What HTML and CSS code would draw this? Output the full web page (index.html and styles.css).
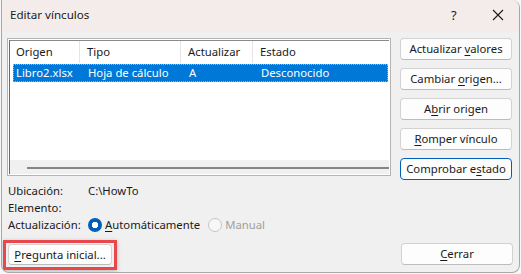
FILE: index.html
```html
<!DOCTYPE html>
<html lang="es">
<head>
  <meta charset="UTF-8">
  <title>Editar vínculos</title>
  <link rel="stylesheet" href="styles.css">
</head>
<body>
  <div class="window">
    <div class="titlebar">
      <span class="title">Editar vínculos</span>
      <span class="help">?</span>
      <span class="close">
        <svg width="12" height="12" viewBox="0 0 12 12"><path d="M1 1L11 11M11 1L1 11" stroke="#1a1a1a" stroke-width="1.1" fill="none"/></svg>
      </span>
    </div>
    <div class="main">
      <div class="left">
        <div class="list">
          <div class="list-inner">
            <div class="row head">
              <div class="c1">Origen</div>
              <div class="c2">Tipo</div>
              <div class="c3">Actualizar</div>
              <div class="c4">Estado</div>
            </div>
            <div class="row sel">
              <div class="c1">Libro2.xlsx</div>
              <div class="c2">Hoja de cálculo</div>
              <div class="c3">A</div>
              <div class="c4">Desconocido</div>
            </div>
            <div class="spacer"></div>
            <div class="hscroll"><div class="thumb"></div></div>
          </div>
        </div>
        <div class="info">
          <div class="info-row"><span class="lbl">Ubicación:</span><span>C:\HowTo</span></div>
          <div class="info-row"><span class="lbl">Elemento:</span></div>
          <div class="info-row">
            <span class="lbl">Actualización:</span>
            <span class="radio on"></span><span class="rtext"><u>A</u>utomáticamente</span>
            <span class="radio off"></span><span class="rtext dim">Manual</span>
          </div>
        </div>
      </div>
      <div class="right">
        <button class="btn">Actualizar <u>v</u>alores</button>
        <button class="btn">Cambiar <u>o</u>rigen...</button>
        <button class="btn">A<u>b</u>rir origen</button>
        <button class="btn"><u>R</u>omper vínculo</button>
        <button class="btn focus">Comprobar e<u>s</u>tado</button>
      </div>
    </div>
    <div class="bottom">
      <span class="mark"><button class="btn small"><u>P</u>regunta inicial...</button></span>
      <button class="btn close-btn"><u>C</u>errar</button>
    </div>
  </div>
</body>
</html>
```

FILE: styles.css
```css
* {box-sizing: border-box;}
body {
  margin: 0;
  background: #f7f7f7;
  font-family: "Noto Sans", sans-serif;
  font-size: 11.3px;
  line-height: 16px;
  color: #1a1a1a;
}
.window {
  margin-left: 1px;
  width: 519px;
  height: 273px;
  background: #f0f0f0;
  border: 1px solid #a7a7a7;
  border-top: none;
  border-radius: 0 8px 8px 8px;
  overflow: hidden;
}
.titlebar {
  height: 32px;
  background: #f4eceb;
  display: flex;
  align-items: center;
  padding-left: 8px;
}
.title {flex: 1; padding-bottom: 2px; font-size: 11.6px;}
.help {width: 26px; font-size: 13px; padding-bottom: 2px;}
.close {width: 42px; display: flex; justify-content: center; padding-bottom: 2px;}
.main {
  display: flex;
  padding: 6px 0 0 5px;
}
.left {width: 384px;}
.list {
  height: 138px;
  border: 1px solid #b4b4b4;
  padding: 1px;
  background: #fff;
}
.list-inner {
  height: 100%;
  border-left: 1px solid #6a6a6a;
  border-top: 1px solid #8a8a8a;
  display: flex;
  flex-direction: column;
}
.row {display: flex; height: 20px; align-items: center;}
.row.head {height: 22px; margin-left: -1px;}
.row div {padding-left: 7px; white-space: nowrap;}
.head div {border-right: 1px solid #e5e5e5; height: 100%; display: flex; align-items: center;}
.c1 {width: 71px;}
.c2 {width: 101px;}
.c3 {width: 72px;}
.c4 {flex: 1;}
.head .c4 {border-right: none;}
.row.sel {
  margin: 1px 0 0 3px;
  width: 375px;
  height: 18px;
  background: #0078d7;
  color: #fff;
  outline: 1px dotted #f5a04a;
  outline-offset: -1px;
}
.sel .c1 {width: 68px; padding-left: 3px;}
.spacer {flex: 1;}
.hscroll {
  height: 14px;
  background: #f0f0f0;
  padding: 7px 0 0 17px;
}
.thumb {height: 2px; background: #858585;}
.info {padding: 6px 0 0 1px;}
.info-row {display: flex; align-items: center; height: 17px;}
.lbl {width: 80px;}
.radio {
  width: 14px;
  height: 14px;
  border-radius: 50%;
  margin-right: 3px;
}
.radio.on {background: radial-gradient(circle, #fff 0 3px, #005fb8 3.5px);}
.radio.off {border: 1px solid #c5c5c5; background: #f7f7f7; margin-left: 8px;}
.dim {color: #a0a0a0;}
.right {
  display: flex;
  flex-direction: column;
  gap: 8px;
  margin-left: 9px;
}
.btn {
  width: 112px;
  height: 22px;
  padding: 0;
  font: inherit;
  color: #1a1a1a;
  background: #fdfdfd;
  border: 1px solid #d2d2d2;
  border-bottom-color: #bcbcbc;
  border-radius: 4px;
}
.btn.focus {border: 1.5px solid #005fb8;}
.bottom {
  display: flex;
  justify-content: space-between;
  align-items: flex-start;
  padding: 7px 6px 0 1px;
}
.mark {
  display: block;
  border: 3px solid #e8484b;
  padding: 1px 2px 2px 2px;
  box-shadow: 0 1px 4px rgba(0,0,0,0.25);
}
.btn.small {width: 104px; height: 21px; display: block;}
.close-btn {margin-top: 3px;}
u {text-underline-offset: 2px;}
```
